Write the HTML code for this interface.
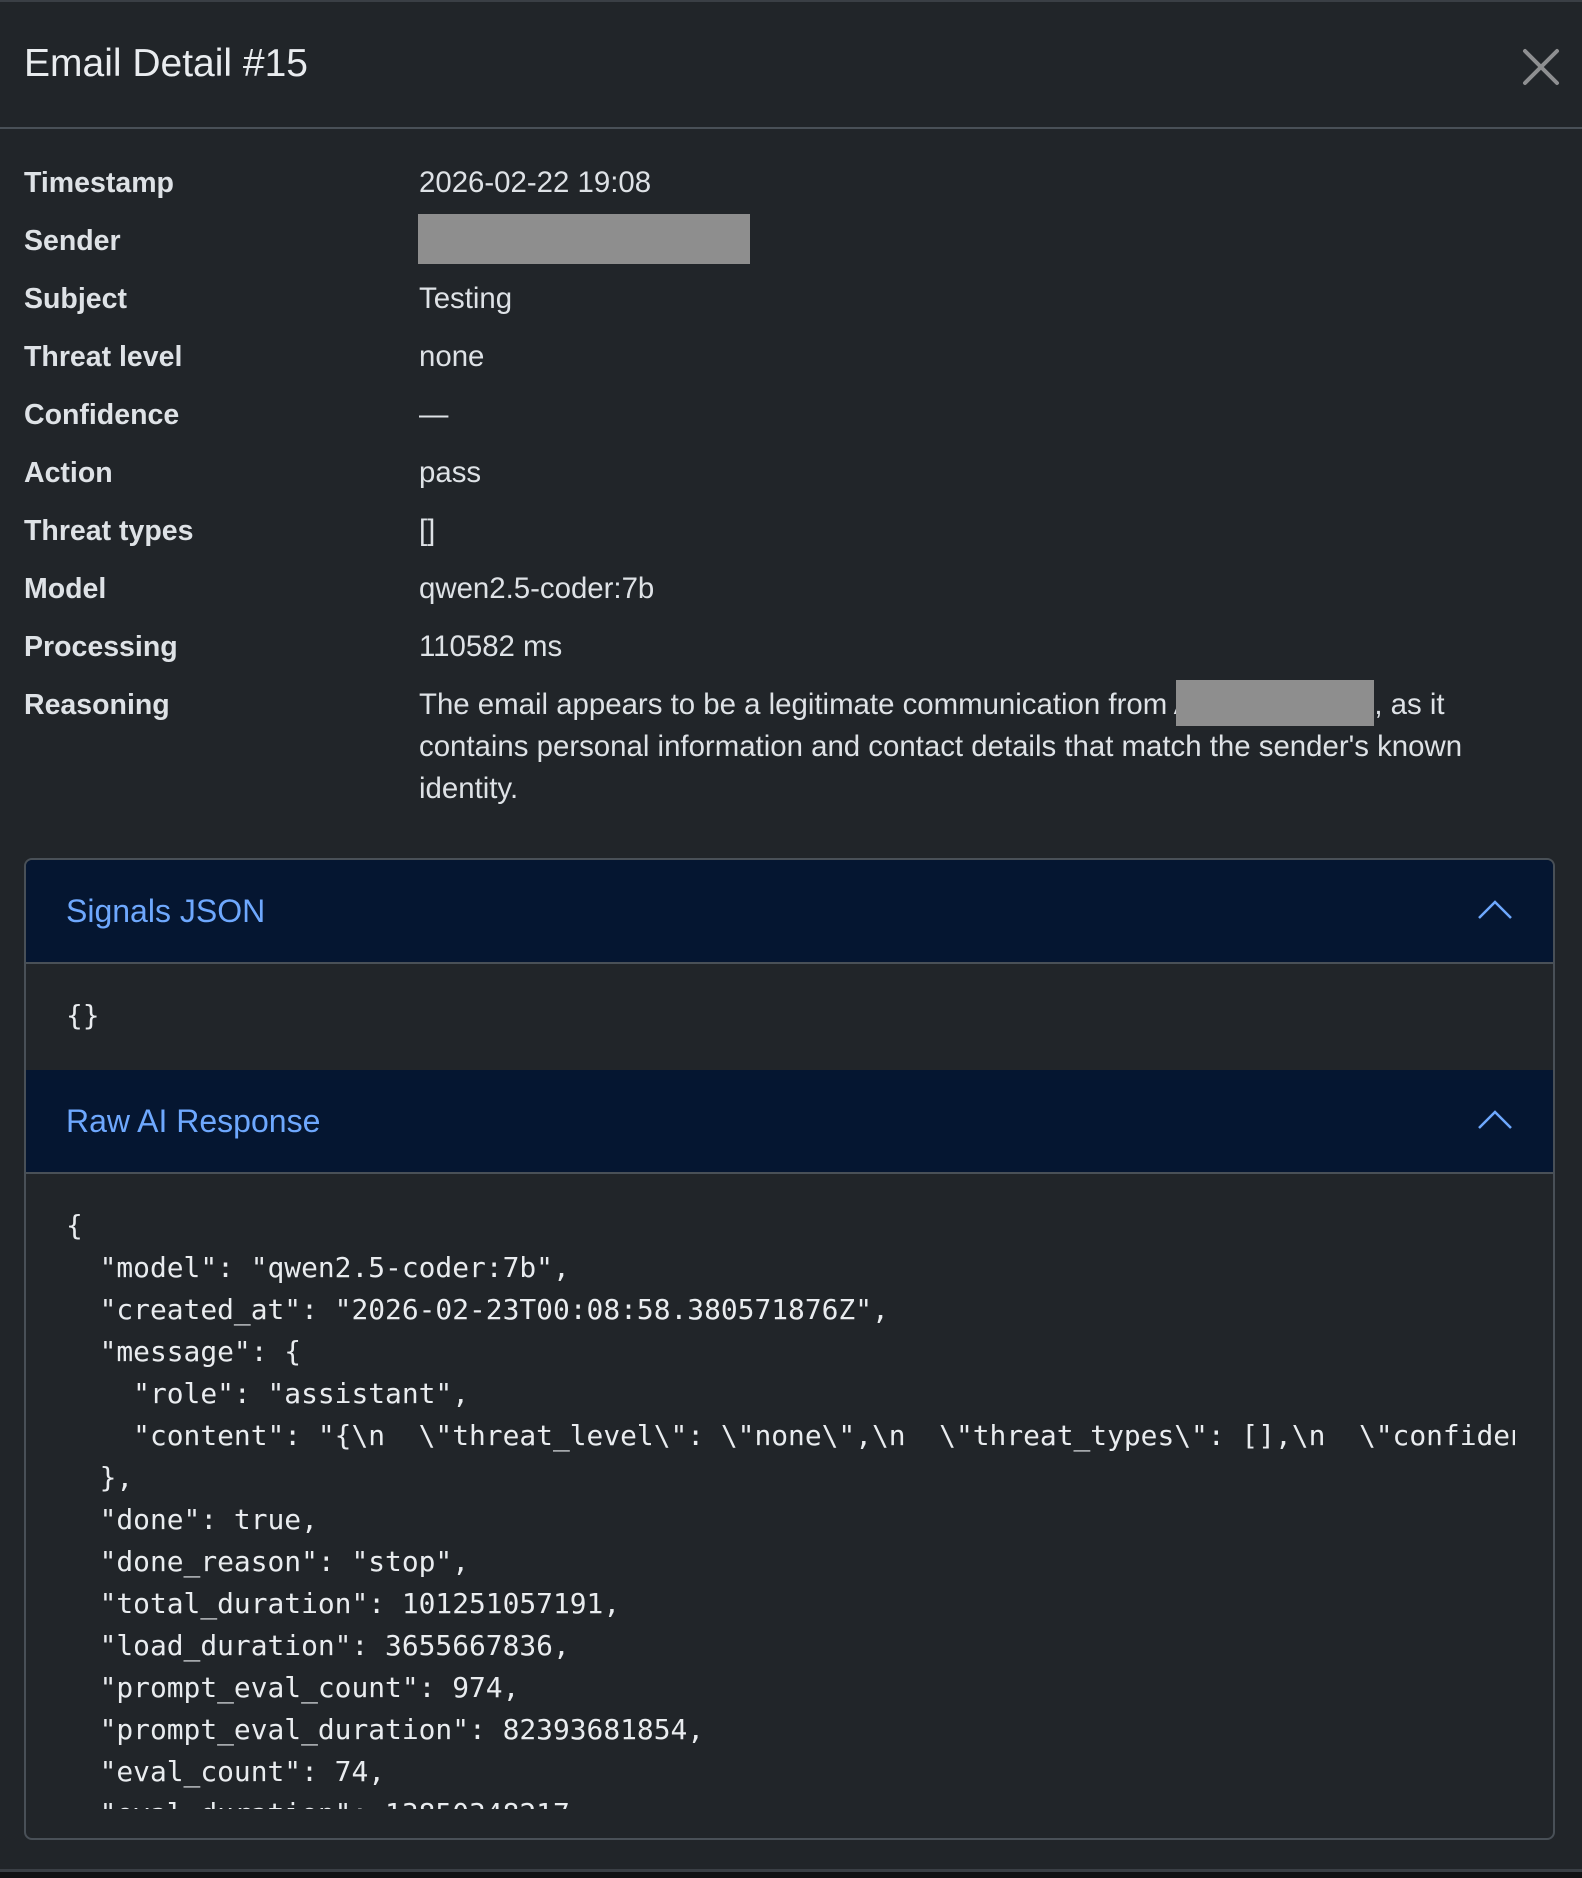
<!DOCTYPE html>
<html><head><meta charset="utf-8"><style>
html,body{margin:0;padding:0;}
body{width:1582px;height:1878px;background:#111214;position:relative;overflow:hidden;font-family:"Liberation Sans",sans-serif;color:#dee2e6;}
.dlg{position:absolute;left:0;top:0;width:1582px;height:1872px;background:#212529;border-top:2px solid #3a3f45;box-sizing:border-box;border-bottom:3px solid #3a3f45;}
.title{position:absolute;left:24px;top:39px;font-size:39px;line-height:46px;color:#e9ecef;}
.hr{position:absolute;left:0;top:125px;width:1582px;height:2px;background:#495057;}
.x{position:absolute;left:1522px;top:46px;}
.lbl{position:absolute;left:24px;font-size:28.5px;font-weight:bold;line-height:40px;white-space:nowrap;}
.val{position:absolute;left:419px;font-size:29.4px;line-height:42px;white-space:nowrap;}
.red{position:absolute;background:#8e8e8e;}
.ired{display:inline-block;width:198px;height:46px;background:#8e8e8e;vertical-align:-12px;margin-left:-17px;}
.acc{position:absolute;left:24px;top:856px;width:1531px;height:982px;border:2px solid #495057;border-radius:8px;box-sizing:border-box;overflow:hidden;}
.hd{position:absolute;left:0;width:100%;height:102px;background:#051631;border-bottom:2px solid #495057;}
.hd span{position:absolute;left:40px;top:31px;font-size:32px;line-height:40px;color:#6ea8fe;}
.hd svg{position:absolute;left:1451px;top:38px;}
pre{margin:0;position:absolute;font-family:"DejaVu Sans Mono","Liberation Mono",monospace;font-size:27.9px;line-height:42px;color:#e9ecef;white-space:pre;overflow:hidden;}
</style></head><body>
<div class="dlg">
<div class="title">Email Detail #15</div>
<svg class="x" width="38" height="38" viewBox="0 0 38 38"><path d="M3 3L35 35M35 3L3 35" stroke="#8e8f91" stroke-width="4" stroke-linecap="round"/></svg>
<div class="hr"></div>

<div class="lbl" style="top:161px">Timestamp</div><div class="val" style="top:160px">2026-02-22 19:08</div>
<div class="lbl" style="top:219px">Sender</div><div class="red" style="left:418px;top:212px;width:332px;height:50px"></div>
<div class="lbl" style="top:277px">Subject</div><div class="val" style="top:276px">Testing</div>
<div class="lbl" style="top:335px">Threat level</div><div class="val" style="top:334px">none</div>
<div class="lbl" style="top:393px">Confidence</div><div class="val" style="top:392px">—</div>
<div class="lbl" style="top:451px">Action</div><div class="val" style="top:450px">pass</div>
<div class="lbl" style="top:509px">Threat types</div><div class="val" style="top:508px">[]</div>
<div class="lbl" style="top:567px">Model</div><div class="val" style="top:566px">qwen2.5-coder:7b</div>
<div class="lbl" style="top:625px">Processing</div><div class="val" style="top:624px">110582 ms</div>
<div class="lbl" style="top:683px">Reasoning</div>
<div class="val" style="top:678px">The email appears to be a legitimate communication from A<span class="ired"></span>, as it<br>contains personal information and contact details that match the sender's known<br>identity.</div>

<div class="acc">
 <div class="hd" style="top:0"><span>Signals JSON</span><svg width="36" height="22" viewBox="0 0 36 22"><path d="M2 20L18 4L34 20" fill="none" stroke="#6ea8fe" stroke-width="2.5"/></svg></div>
 <pre style="left:40px;top:135px">{}</pre>
 <div class="hd" style="top:210px"><span>Raw AI Response</span><svg width="36" height="22" viewBox="0 0 36 22"><path d="M2 20L18 4L34 20" fill="none" stroke="#6ea8fe" stroke-width="2.5"/></svg></div>
 <pre style="left:40px;top:345px;width:1449px;height:604px">{
  "model": "qwen2.5-coder:7b",
  "created_at": "2026-02-23T00:08:58.380571876Z",
  "message": {
    "role": "assistant",
    "content": "{\n  \"threat_level\": \"none\",\n  \"threat_types\": [],\n  \"confidence\": 0.9}"
  },
  "done": true,
  "done_reason": "stop",
  "total_duration": 101251057191,
  "load_duration": 3655667836,
  "prompt_eval_count": 974,
  "prompt_eval_duration": 82393681854,
  "eval_count": 74,
  "eval_duration": 13850348217
}</pre>
</div>
</div>
</body></html>
